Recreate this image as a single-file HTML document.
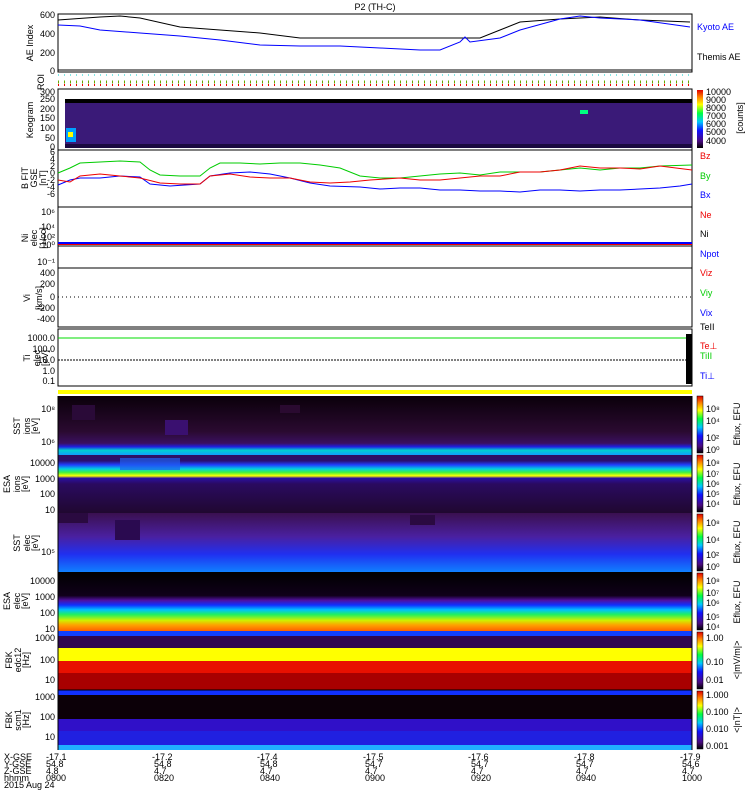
<!DOCTYPE html><html><head><meta charset="utf-8"><style>
body{margin:0;background:#fff;width:750px;height:800px;overflow:hidden;font-family:"Liberation Sans",sans-serif}
svg text{font-family:"Liberation Sans",sans-serif;font-size:9px}
</style></head><body>
<svg width="750" height="800" xmlns="http://www.w3.org/2000/svg">
<defs>
<linearGradient id="rb" x1="0" y1="1" x2="0" y2="0">
<stop offset="0" stop-color="#000"/><stop offset="0.12" stop-color="#4a0a80"/><stop offset="0.3" stop-color="#1010ff"/><stop offset="0.45" stop-color="#00c8ff"/><stop offset="0.6" stop-color="#00ff40"/><stop offset="0.75" stop-color="#ffff00"/><stop offset="0.88" stop-color="#ff8000"/><stop offset="1" stop-color="#e00000"/></linearGradient>
<linearGradient id="esa2" x1="0" y1="0" x2="0" y2="1">
<stop offset="0" stop-color="#000"/><stop offset="0.4" stop-color="#10001a"/><stop offset="0.48" stop-color="#5010a0"/><stop offset="0.56" stop-color="#1030ff"/><stop offset="0.64" stop-color="#00c0ff"/><stop offset="0.72" stop-color="#20f060"/><stop offset="0.82" stop-color="#d0f000"/><stop offset="0.9" stop-color="#ffa000"/><stop offset="1" stop-color="#ff6000"/></linearGradient>
<linearGradient id="sst2" x1="0" y1="0" x2="0" y2="1">
<stop offset="0" stop-color="#3a1050"/><stop offset="0.4" stop-color="#4a20a0"/><stop offset="0.7" stop-color="#2030f0"/><stop offset="1" stop-color="#1080ff"/></linearGradient>
<linearGradient id="sst1" x1="0" y1="0" x2="0" y2="1">
<stop offset="0" stop-color="#0a000a"/><stop offset="0.6" stop-color="#2a0a30"/><stop offset="0.8" stop-color="#3a1060"/><stop offset="0.86" stop-color="#2020e0"/><stop offset="0.92" stop-color="#00d0d0"/><stop offset="1" stop-color="#10a0ff"/></linearGradient>
<linearGradient id="esa1" x1="0" y1="0" x2="0" y2="1">
<stop offset="0" stop-color="#301060"/><stop offset="0.1" stop-color="#2a1070"/><stop offset="0.17" stop-color="#2040ff"/><stop offset="0.24" stop-color="#00d0e0"/><stop offset="0.3" stop-color="#40f040"/><stop offset="0.36" stop-color="#ffff00"/><stop offset="0.4" stop-color="#2a10a0"/><stop offset="0.5" stop-color="#2a0a60"/><stop offset="1" stop-color="#200830"/></linearGradient>
</defs>
<text x="375" y="10" text-anchor="middle">P2 (TH-C)</text>
<!-- AE -->
<rect x="58" y="14" width="634" height="58" fill="none" stroke="#000"/>
<polyline fill="none" stroke="#000" points="58,20 100,17 120,16 140,18 180,27 220,30 260,33 300,38 340,38 420,38 480,38 500,30 520,22 560,19 600,17 640,20 690,22"/>
<polyline fill="none" stroke="#00f" points="58,25 80,26 100,30 140,33 180,36 220,40 260,45 300,46 340,46 380,48 420,50 440,50 460,42 465,37 470,42 500,38 520,30 560,19 580,16 600,18 640,20 690,27"/>
<line x1="58" y1="70" x2="692" y2="70" stroke="#000"/>
<g text-anchor="end"><text x="55" y="18">600</text><text x="55" y="37">400</text><text x="55" y="56">200</text><text x="55" y="74">0</text></g>
<text transform="translate(33,43) rotate(-90)" text-anchor="middle">AE Index</text>
<text x="697" y="30" fill="#00f">Kyoto AE</text><text x="697" y="60">Themis AE</text>
<!-- ROI -->
<line x1="58" y1="75" x2="692" y2="75" stroke="#0cc" stroke-dasharray="1,5"/>
<line x1="58" y1="82" x2="692" y2="82" stroke="#6a0" stroke-dasharray="1,5" stroke-width="3"/>
<line x1="58" y1="85" x2="692" y2="85" stroke="#e00" stroke-dasharray="1,5" stroke-width="2"/>
<text transform="translate(44,82) rotate(-90)" text-anchor="middle">ROI</text>
<!-- Keogram -->
<rect x="58" y="89" width="634" height="61" fill="#fff" stroke="#000"/>
<rect x="65" y="99" width="627" height="49" fill="#3a1a78"/>
<rect x="65" y="99" width="627" height="4" fill="#000"/>
<rect x="65" y="144" width="627" height="4" fill="#1a0a40"/>
<rect x="66" y="128" width="10" height="14" fill="#00a0ff"/><rect x="68" y="132" width="5" height="5" fill="#ff0"/>
<rect x="580" y="110" width="8" height="4" fill="#00ff80"/>
<g text-anchor="end"><text x="55" y="95">300</text><text x="55" y="102">250</text><text x="55" y="112">200</text><text x="55" y="121">150</text><text x="55" y="131">100</text><text x="55" y="141">50</text><text x="55" y="150">0</text></g>
<text transform="translate(33,120) rotate(-90)" text-anchor="middle">Keogram</text>
<rect x="697" y="90" width="6" height="58" fill="url(#rb)"/>
<g><text x="706" y="95">10000</text><text x="706" y="103">9000</text><text x="706" y="111">8000</text><text x="706" y="119">7000</text><text x="706" y="127">6000</text><text x="706" y="135">5000</text><text x="706" y="144">4000</text></g>
<text transform="translate(743,118) rotate(-90)" text-anchor="middle">[counts]</text>
<!-- B -->
<rect x="58" y="150" width="634" height="57" fill="none" stroke="#000"/>
<polyline fill="none" stroke="#0c0" points="58,173 70,168 80,163 100,162 120,161 140,162 150,170 160,175 180,176 200,176 210,168 220,163 240,163 260,164 280,163 300,163 320,165 340,168 360,176 380,178 400,178 420,176 440,174 460,173 480,175 500,172 520,172 540,172 560,170 580,168 600,170 620,168 640,168 660,166 692,165"/>
<polyline fill="none" stroke="#00f" points="58,185 70,180 80,178 100,178 120,176 140,177 150,184 170,186 200,184 210,176 230,173 250,172 270,174 290,178 310,183 330,186 360,187 380,189 400,188 420,188 440,190 460,190 480,191 500,191 520,192 540,190 560,190 580,191 600,190 620,190 640,189 660,188 680,186 692,184"/>
<polyline fill="none" stroke="#e00" points="58,180 70,182 80,176 100,174 120,176 140,178 160,183 180,184 200,184 210,176 230,174 250,177 270,178 290,178 310,182 330,183 350,182 370,180 400,178 420,180 440,180 460,178 480,176 500,176 520,172 540,172 560,170 580,166 600,168 620,168 640,169 660,166 692,170"/>
<g text-anchor="end"><text x="55" y="155">6</text><text x="55" y="162">4</text><text x="55" y="169">2</text><text x="55" y="176">0</text><text x="55" y="183">-2</text><text x="55" y="190">-4</text><text x="55" y="197">-6</text></g>
<text transform="translate(28,178) rotate(-90)" text-anchor="middle">B FIT</text>
<text transform="translate(37,178) rotate(-90)" text-anchor="middle">GSE</text>
<text transform="translate(46,178) rotate(-90)" text-anchor="middle">[nT]</text>
<text x="700" y="159" fill="#e00">Bz</text><text x="700" y="179" fill="#0c0">By</text><text x="700" y="198" fill="#00f">Bx</text>
<!-- Ni -->
<rect x="58" y="207" width="634" height="61" fill="none" stroke="#000"/>
<line x1="58" y1="244" x2="692" y2="244" stroke="#e00" stroke-width="2"/>
<line x1="58" y1="243" x2="692" y2="243" stroke="#00f" stroke-width="2"/>
<line x1="58" y1="246" x2="692" y2="246" stroke="#000"/>
<g text-anchor="end"><text x="55" y="215">10⁶</text><text x="55" y="230">10⁴</text><text x="55" y="240">10²</text><text x="55" y="248">10⁰</text><text x="55" y="265">10⁻¹</text></g>
<text transform="translate(28,238) rotate(-90)" text-anchor="middle">Ni</text>
<text transform="translate(37,238) rotate(-90)" text-anchor="middle">elec</text>
<text transform="translate(46,238) rotate(-90)" text-anchor="middle">[1/cc]</text>
<text x="700" y="218" fill="#e00">Ne</text><text x="700" y="237">Ni</text><text x="700" y="257" fill="#00f">Npot</text>
<!-- Vi -->
<rect x="58" y="268" width="634" height="59" fill="none" stroke="#000"/>
<line x1="58" y1="297" x2="692" y2="297" stroke="#000" stroke-dasharray="1,3"/>
<g text-anchor="end"><text x="55" y="276">400</text><text x="55" y="287">200</text><text x="55" y="300">0</text><text x="55" y="311">-200</text><text x="55" y="322">-400</text></g>
<text transform="translate(30,298) rotate(-90)" text-anchor="middle">Vi</text>
<text transform="translate(42,298) rotate(-90)" text-anchor="middle">[km/s]</text>
<text x="700" y="276" fill="#e00">Viz</text><text x="700" y="296" fill="#0c0">Viy</text><text x="700" y="316" fill="#00f">Vix</text>
<!-- Ti -->
<rect x="58" y="329" width="634" height="57" fill="none" stroke="#000"/>
<line x1="58" y1="338" x2="692" y2="338" stroke="#0d0"/>
<line x1="58" y1="360" x2="692" y2="360" stroke="#000" stroke-dasharray="2,1"/>
<rect x="686" y="334" width="6" height="50" fill="#000"/>
<g text-anchor="end"><text x="55" y="341">1000.0</text><text x="55" y="352">100.0</text><text x="55" y="363">10.0</text><text x="55" y="374">1.0</text><text x="55" y="384">0.1</text></g>
<text transform="translate(30,358) rotate(-90)" text-anchor="middle">Ti</text>
<text transform="translate(40,358) rotate(-90)" text-anchor="middle">elec</text>
<text transform="translate(48,358) rotate(-90)" text-anchor="middle">[eV]</text>
<text x="700" y="330">TeII</text><text x="700" y="349" fill="#e00">Te⊥</text><text x="700" y="359" fill="#0c0">TiII</text><text x="700" y="379" fill="#00f">Ti⊥</text>
<!-- yellow bar -->
<rect x="58" y="390" width="634" height="4" fill="#ff0"/>
<!-- SST1 -->
<rect x="58" y="396" width="634" height="59" fill="url(#sst1)"/>
<rect x="72" y="405" width="23" height="15" fill="#2a0a38"/><rect x="165" y="420" width="23" height="15" fill="#3a1070"/><rect x="280" y="405" width="20" height="8" fill="#2a0a30"/>
<!-- ESA1 -->
<rect x="58" y="455" width="634" height="58" fill="url(#esa1)"/>
<rect x="120" y="458" width="60" height="12" fill="#2060f0" opacity="0.7"/>
<!-- SST2 -->
<rect x="58" y="513" width="634" height="59" fill="url(#sst2)"/>
<rect x="58" y="513" width="30" height="10" fill="#2a0a40"/><rect x="115" y="520" width="25" height="20" fill="#2a0a50"/><rect x="410" y="515" width="25" height="10" fill="#2a0a40"/>
<!-- ESA2 -->
<rect x="58" y="572" width="634" height="59" fill="url(#esa2)"/>
<!-- FBK1 -->
<rect x="58" y="631" width="634" height="5" fill="#1040ff"/>
<rect x="58" y="636" width="634" height="12" fill="#300850"/>
<rect x="58" y="648" width="634" height="13" fill="#ffff00"/>
<rect x="58" y="661" width="634" height="12" fill="#e81000"/>
<rect x="58" y="673" width="634" height="17" fill="#a80000"/>
<!-- FBK2 -->
<rect x="58" y="690" width="634" height="5" fill="#1030ff"/>
<rect x="58" y="695" width="634" height="24" fill="#0c0008"/>
<rect x="58" y="719" width="634" height="12" fill="#3010c8"/>
<rect x="58" y="731" width="634" height="14" fill="#2020e0"/>
<rect x="58" y="745" width="634" height="5" fill="#20b0ff"/>
<line x1="58" y1="690" x2="692" y2="690" stroke="#000"/>
<line x1="58" y1="396" x2="58" y2="750" stroke="#000"/><line x1="692" y1="396" x2="692" y2="750" stroke="#000"/>
<g text-anchor="end">
<text x="55" y="412">10⁸</text><text x="55" y="445">10⁶</text>
<text x="55" y="466">10000</text><text x="55" y="482">1000</text><text x="55" y="497">100</text><text x="55" y="513">10</text>
<text x="55" y="555">10⁵</text>
<text x="55" y="584">10000</text><text x="55" y="600">1000</text><text x="55" y="616">100</text><text x="55" y="632">10</text>
<text x="55" y="641">1000</text><text x="55" y="663">100</text><text x="55" y="683">10</text>
<text x="55" y="700">1000</text><text x="55" y="720">100</text><text x="55" y="740">10</text></g>
<text transform="translate(20,426) rotate(-90)" text-anchor="middle">SST</text><text transform="translate(30,426) rotate(-90)" text-anchor="middle">ions</text><text transform="translate(38,426) rotate(-90)" text-anchor="middle">[eV]</text>
<text transform="translate(10,484) rotate(-90)" text-anchor="middle">ESA</text><text transform="translate(20,484) rotate(-90)" text-anchor="middle">ions</text><text transform="translate(28,484) rotate(-90)" text-anchor="middle">[eV]</text>
<text transform="translate(20,543) rotate(-90)" text-anchor="middle">SST</text><text transform="translate(30,543) rotate(-90)" text-anchor="middle">elec</text><text transform="translate(38,543) rotate(-90)" text-anchor="middle">[eV]</text>
<text transform="translate(10,601) rotate(-90)" text-anchor="middle">ESA</text><text transform="translate(20,601) rotate(-90)" text-anchor="middle">elec</text><text transform="translate(28,601) rotate(-90)" text-anchor="middle">[eV]</text>
<text transform="translate(12,660) rotate(-90)" text-anchor="middle">FBK</text><text transform="translate(21,660) rotate(-90)" text-anchor="middle">edc12</text><text transform="translate(29,660) rotate(-90)" text-anchor="middle">[Hz]</text>
<text transform="translate(12,720) rotate(-90)" text-anchor="middle">FBK</text><text transform="translate(21,720) rotate(-90)" text-anchor="middle">scm1</text><text transform="translate(29,720) rotate(-90)" text-anchor="middle">[Hz]</text>
<!-- colorbars -->
<rect x="697" y="396" width="6" height="57" fill="url(#rb)" stroke="#000" stroke-width="0.5"/>
<rect x="697" y="455" width="6" height="57" fill="url(#rb)" stroke="#000" stroke-width="0.5"/>
<rect x="697" y="514" width="6" height="57" fill="url(#rb)" stroke="#000" stroke-width="0.5"/>
<rect x="697" y="573" width="6" height="57" fill="url(#rb)" stroke="#000" stroke-width="0.5"/>
<rect x="697" y="632" width="6" height="57" fill="url(#rb)" stroke="#000" stroke-width="0.5"/>
<rect x="697" y="691" width="6" height="58" fill="url(#rb)" stroke="#000" stroke-width="0.5"/>
<g font-size="8"><text x="706" y="412">10⁸</text><text x="706" y="424">10⁴</text><text x="706" y="441">10²</text><text x="706" y="453">10⁰</text>
<text x="706" y="466">10⁸</text><text x="706" y="477">10⁷</text><text x="706" y="487">10⁶</text><text x="706" y="497">10⁵</text><text x="706" y="507">10⁴</text>
<text x="706" y="526">10⁸</text><text x="706" y="543">10⁴</text><text x="706" y="558">10²</text><text x="706" y="570">10⁰</text>
<text x="706" y="584">10⁸</text><text x="706" y="596">10⁷</text><text x="706" y="606">10⁶</text><text x="706" y="620">10⁵</text><text x="706" y="630">10⁴</text>
<text x="706" y="641">1.00</text><text x="706" y="665">0.10</text><text x="706" y="683">0.01</text>
<text x="706" y="698">1.000</text><text x="706" y="715">0.100</text><text x="706" y="732">0.010</text><text x="706" y="749">0.001</text></g>
<g font-size="8"><text transform="translate(740,424) rotate(-90)" text-anchor="middle">Eflux, EFU</text><text transform="translate(740,484) rotate(-90)" text-anchor="middle">Eflux, EFU</text><text transform="translate(740,542) rotate(-90)" text-anchor="middle">Eflux, EFU</text><text transform="translate(740,602) rotate(-90)" text-anchor="middle">Eflux, EFU</text><text transform="translate(740,660) rotate(-90)" text-anchor="middle">&lt;|mV/m|&gt;</text><text transform="translate(740,720) rotate(-90)" text-anchor="middle">&lt;|nT|&gt;</text></g>
<!-- bottom labels -->
<g font-size="8"><text x="4" y="760">X-GSE</text><text x="4" y="767">Y-GSE</text><text x="4" y="774">Z-GSE</text><text x="4" y="781">hhmm</text><text x="4" y="788">2015 Aug 24</text></g>
<g font-size="8">
<text x="46" y="760">-17.1</text><text x="46" y="767">54.8</text><text x="46" y="774">4.8</text><text x="46" y="781">0800</text>
<text x="152" y="760">-17.2</text><text x="154" y="767">54.8</text><text x="154" y="774">4.7</text><text x="154" y="781">0820</text>
<text x="257" y="760">-17.4</text><text x="260" y="767">54.8</text><text x="260" y="774">4.7</text><text x="260" y="781">0840</text>
<text x="363" y="760">-17.5</text><text x="365" y="767">54.7</text><text x="365" y="774">4.7</text><text x="365" y="781">0900</text>
<text x="468" y="760">-17.6</text><text x="471" y="767">54.7</text><text x="471" y="774">4.7</text><text x="471" y="781">0920</text>
<text x="574" y="760">-17.8</text><text x="576" y="767">54.7</text><text x="576" y="774">4.7</text><text x="576" y="781">0940</text>
<text x="680" y="760">-17.9</text><text x="682" y="767">54.6</text><text x="682" y="774">4.7</text><text x="682" y="781">1000</text></g>
</svg>
</body></html>
